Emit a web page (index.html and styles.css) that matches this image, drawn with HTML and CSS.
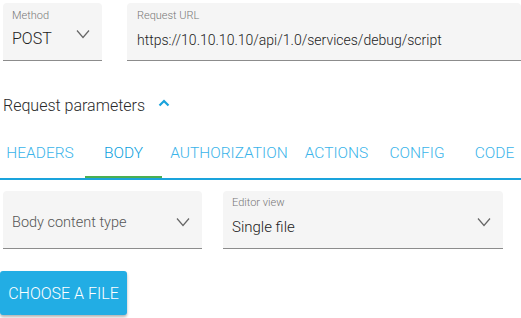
FILE: index.html
```html
<!DOCTYPE html>
<html>
<head>
<meta charset="utf-8">
<link rel="stylesheet" href="styles.css">
</head>
<body>
<div class="page">
  <div class="row-top">
    <div class="field field-method">
      <div class="field-label">Method</div>
      <div class="field-value">POST</div>
      <svg class="chev" width="14" height="10" viewBox="0 0 14 10"><path d="M1 1.5 L7 8.5 L13 1.5" fill="none" stroke="#666" stroke-width="1.2"/></svg>
    </div>
    <div class="field field-url">
      <div class="field-label">Request URL</div>
      <div class="field-value url">https://10.10.10.10/api/1.0/services/debug/script</div>
    </div>
  </div>

  <div class="params-head">
    <span class="params-title">Request parameters</span>
    <svg class="chev-up" width="12" height="8" viewBox="0 0 12 8"><path d="M1.5 6.5 L6 2 L10.5 6.5" fill="none" stroke="#1aa3dc" stroke-width="2.2"/></svg>
  </div>

  <div class="tabs">
    <div class="tab t1">HEADERS</div>
    <div class="tab t2 active">BODY</div>
    <div class="tab t3">AUTHORIZATION</div>
    <div class="tab t4">ACTIONS</div>
    <div class="tab t5">CONFIG</div>
    <div class="tab t6">CODE</div>
  </div>

  <div class="row-body">
    <div class="field field-type">
      <div class="field-value placeholder">Body content type</div>
      <svg class="chev" width="14" height="10" viewBox="0 0 14 10"><path d="M1 1.5 L7 8.5 L13 1.5" fill="none" stroke="#666" stroke-width="1.2"/></svg>
    </div>
    <div class="field field-editor">
      <div class="field-label">Editor view</div>
      <div class="field-value">Single file</div>
      <svg class="chev" width="14" height="10" viewBox="0 0 14 10"><path d="M1 1.5 L7 8.5 L13 1.5" fill="none" stroke="#666" stroke-width="1.2"/></svg>
    </div>
  </div>

  <div class="btn-row">
    <button class="btn">CHOOSE A FILE</button>
  </div>
</div>
</body>
</html>
```

FILE: styles.css
```css
* { box-sizing: border-box; }
html, body { margin: 0; padding: 0; background: #fff; }
body {
  font-family: Roboto, "Noto Sans", sans-serif;
  font-weight: 300;
  width: 521px;
  height: 318px;
  overflow: hidden;
}
.page { padding-top: 3px; }

.row-top {
  display: flex;
  gap: 25px;
  padding-left: 3px;
}
.field {
  position: relative;
  background: #f5f5f5;
  border-radius: 4px 4px 0 0;
  border-bottom: 1px solid #8c8c8c;
  height: 58px;
  padding-left: 9px;
}
.field-method { width: 99px; }
.field-url { flex: 1; padding-left: 10px; }
.field-label {
  font-size: 11px;
  color: #777;
  padding-top: 6px;
  line-height: 13px;
}
.field-value {
  font-size: 16px;
  color: #222;
  line-height: 20px;
  padding-top: 7px;
}
.field-value.url { font-size: 14px; padding-top: 8px; }
.chev {
  position: absolute;
  right: 12px;
  top: 26px;
}

.params-head {
  display: flex;
  align-items: center;
  margin-top: 34px;
  padding-left: 3px;
  height: 20px;
}
.params-title { font-size: 16px; color: #2a2a2a; }
.chev-up { margin-left: 13px; margin-top: -5px; }

.tabs {
  display: flex;
  margin-top: 13px;
  height: 52px;
  border-bottom: 2px solid #1aa3dc;
}
.tab {
  flex: none;
  display: flex;
  align-items: center;
  justify-content: center;
  font-size: 15.5px;
  color: #3ab4ea;
  height: 50px;
}
.tab.active {
  color: #0ba0de;
  border-bottom: 2px solid #4caf50;
  padding-top: 2px;
}
.t1 { width: 85px; padding-right: 5px; }
.t2 { width: 77px; }
.t3 { width: 134px; }
.t4 { width: 81px; }
.t5 { width: 80px; }
.t6 { width: 75px; }

.row-body {
  display: flex;
  gap: 21px;
  padding-left: 3px;
  margin-top: 11px;
}
.field-type { width: 199px; }
.field-type .field-value { color: #555; padding-top: 22px; font-size: 14.5px; }
.field-editor { width: 280px; }
.field-editor .field-label { padding-top: 5px; }
.field-editor .field-value { padding-top: 8px; font-size: 15px; }
.field-type .chev, .field-editor .chev { top: 26px; }

.btn-row { margin-top: 22px; }
.btn {
  width: 127px;
  height: 44px;
  border: none;
  border-radius: 3px;
  background: #22ade4;
  color: #fff;
  font-family: Roboto, "Noto Sans", sans-serif;
  font-weight: 300;
  font-size: 16px;
  padding: 0;
  box-shadow: 0 2px 3px rgba(0,0,0,0.3);
}
```
